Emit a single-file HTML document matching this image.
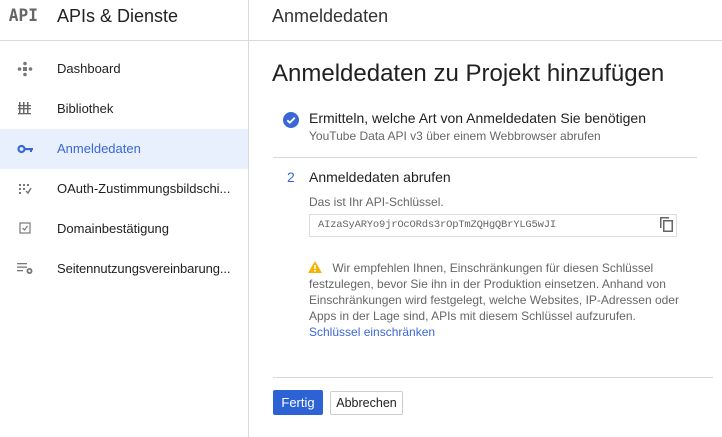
<!DOCTYPE html>
<html><head><meta charset="utf-8"><style>
*{margin:0;padding:0;box-sizing:border-box}
body{width:722px;height:437px;overflow:hidden;background:#fff;font-family:"Liberation Sans",sans-serif;color:#212121;position:relative}
.a{position:absolute;white-space:nowrap}
</style></head><body>
<div class="a" style="left:0;top:40px;width:722px;height:1px;background:#dadada"></div>
<div class="a" style="left:248px;top:0;width:1px;height:437px;background:#dadada"></div>
<div class="a" style="left:8px;top:6px;font-family:'DejaVu Sans Mono',monospace;font-weight:bold;font-size:17px;color:#666;transform:scaleX(0.95)">API</div>
<div class="a" style="left:57px;top:6px;font-size:18px;color:#222">APIs &amp; Dienste</div>
<div class="a" style="left:272px;top:6px;font-size:18px;color:#333">Anmeldedaten</div>
<div class="a" style="left:0;top:129px;width:248px;height:40px;background:#e8f0fe"></div>
<div class="a" style="left:57px;top:61px;font-size:13px">Dashboard</div>
<div class="a" style="left:57px;top:101px;font-size:13px">Bibliothek</div>
<div class="a" style="left:57px;top:141px;font-size:13px;color:#3b66d6">Anmeldedaten</div>
<div class="a" style="left:57px;top:181px;font-size:13px">OAuth-Zustimmungsbildschi...</div>
<div class="a" style="left:57px;top:221px;font-size:13px">Domainbestätigung</div>
<div class="a" style="left:57px;top:261px;font-size:13px;letter-spacing:-0.1px">Seitennutzungsvereinbarung...</div>
<svg class="a" style="left:17px;top:61px" width="16" height="16" viewBox="0 0 16 16" fill="#777"><circle cx="8" cy="2.5" r="1.8"/><circle cx="8" cy="13.5" r="1.8"/><circle cx="2.5" cy="8" r="1.8"/><circle cx="13.5" cy="8" r="1.8"/><rect x="6" y="6" width="4" height="4"/></svg>
<svg class="a" style="left:18px;top:101px" width="14" height="14" viewBox="0 0 14 14" fill="#666"><rect x="1" y="1" width="1.5" height="12"/><rect x="5" y="1" width="1.5" height="12"/><rect x="9" y="1" width="1.5" height="12"/><rect x="0" y="4" width="13" height="1.3"/><rect x="0" y="7" width="13" height="1.3"/><rect x="0" y="12" width="13" height="1.3"/></svg>
<svg class="a" style="left:17px;top:144px" width="18" height="10" viewBox="0 0 18 10"><circle cx="4.5" cy="5" r="3" fill="none" stroke="#3b66d6" stroke-width="2.2"/><rect x="7" y="4" width="9" height="2.2" fill="#3b66d6"/><rect x="13" y="4" width="2" height="4" fill="#3b66d6"/></svg>
<svg class="a" style="left:18px;top:183px" width="14" height="12" viewBox="0 0 14 12" fill="#777"><rect x="1" y="1" width="2" height="2"/><rect x="5" y="1" width="2" height="2"/><rect x="9" y="1" width="2" height="2"/><rect x="1" y="5" width="2" height="2"/><rect x="5" y="5" width="2" height="2"/><rect x="1" y="9" width="2" height="2"/><path d="M8 8l2 2 3-5" stroke="#777" stroke-width="1.5" fill="none"/></svg>
<svg class="a" style="left:19px;top:222px" width="12" height="12" viewBox="0 0 12 12"><rect x="1" y="1" width="10" height="10" fill="none" stroke="#777" stroke-width="1.2"/><path d="M3.5 6l2 2 3-4" stroke="#777" stroke-width="1.2" fill="none"/></svg>
<svg class="a" style="left:17px;top:262px" width="17" height="13" viewBox="0 0 17 13" fill="#777"><rect x="0" y="1" width="10" height="1.3"/><rect x="0" y="4.5" width="10" height="1.3"/><rect x="0" y="8" width="6" height="1.3"/><circle cx="12.5" cy="9" r="3"/><circle cx="12.5" cy="9" r="1.2" fill="#fff"/></svg>
<div class="a" style="left:272px;top:60px;font-size:24px;color:#212121">Anmeldedaten zu Projekt hinzufügen</div>
<svg class="a" style="left:283px;top:112px" width="16" height="16" viewBox="0 0 16 16"><circle cx="8" cy="8" r="8" fill="#3b66d6"/><path d="M4.3 8.3l2.5 2.4 5-5" stroke="#fff" stroke-width="1.9" fill="none"/></svg>
<div class="a" style="left:309px;top:110px;font-size:14px">Ermitteln, welche Art von Anmeldedaten Sie benötigen</div>
<div class="a" style="left:309px;top:129px;font-size:12px;color:#666">YouTube Data API v3 über einem Webbrowser abrufen</div>
<div class="a" style="left:273px;top:157px;width:424px;height:1px;background:#dadada"></div>
<div class="a" style="left:287px;top:169px;font-size:14px;color:#3b66d6">2</div>
<div class="a" style="left:309px;top:169px;font-size:14px">Anmeldedaten abrufen</div>
<div class="a" style="left:309px;top:195px;font-size:12px;color:#666">Das ist Ihr API-Schlüssel.</div>
<div class="a" style="left:309px;top:214px;width:368px;height:23px;border:1px solid #ddd"></div>
<div class="a" style="left:318px;top:219px;font-family:'Liberation Mono',monospace;font-size:10.5px;color:#666;letter-spacing:-0.2px">AIzaSyARYo9jrOcORds3rOpTmZQHgQBrYLG5wJI</div>
<svg class="a" style="left:660px;top:217px" width="13" height="15" viewBox="0 0 13 15" fill="#666"><path d="M0 0h9v1.5H1.5V11H0z"/><path d="M3 3h10v12H3zM4.5 4.5v9h7v-9z"/></svg>
<svg class="a" style="left:308px;top:261px" width="14" height="12" viewBox="0 0 14 12"><path d="M7 0L14 12H0z" fill="#f4b400"/><rect x="6.2" y="4" width="1.6" height="4" fill="#fff"/><rect x="6.2" y="9" width="1.6" height="1.6" fill="#fff"/></svg>
<div class="a" style="left:309px;top:260px;font-size:12px;line-height:16px;color:#666;white-space:normal;width:382px">&nbsp;&nbsp;&nbsp;&nbsp;&nbsp;&nbsp;&nbsp;Wir empfehlen Ihnen, Einschränkungen für diesen Schlüssel festzulegen, bevor Sie ihn in der Produktion einsetzen. Anhand von Einschränkungen wird festgelegt, welche Websites, IP-Adressen oder Apps in der Lage sind, APIs mit diesem Schlüssel aufzurufen.<br><span style="color:#3b66d6">Schlüssel einschränken</span></div>
<div class="a" style="left:273px;top:377px;width:440px;height:1px;background:#dadada"></div>
<div class="a" style="left:273px;top:390px;width:50px;height:25px;background:#2d62d4;border-radius:2px;color:#fff;font-size:13px;text-align:center;line-height:25px">Fertig</div>
<div class="a" style="left:330px;top:391px;width:73px;height:24px;border:1px solid #ccc;border-radius:2px;font-size:12.5px;text-align:center;line-height:22px">Abbrechen</div>
</body></html>
